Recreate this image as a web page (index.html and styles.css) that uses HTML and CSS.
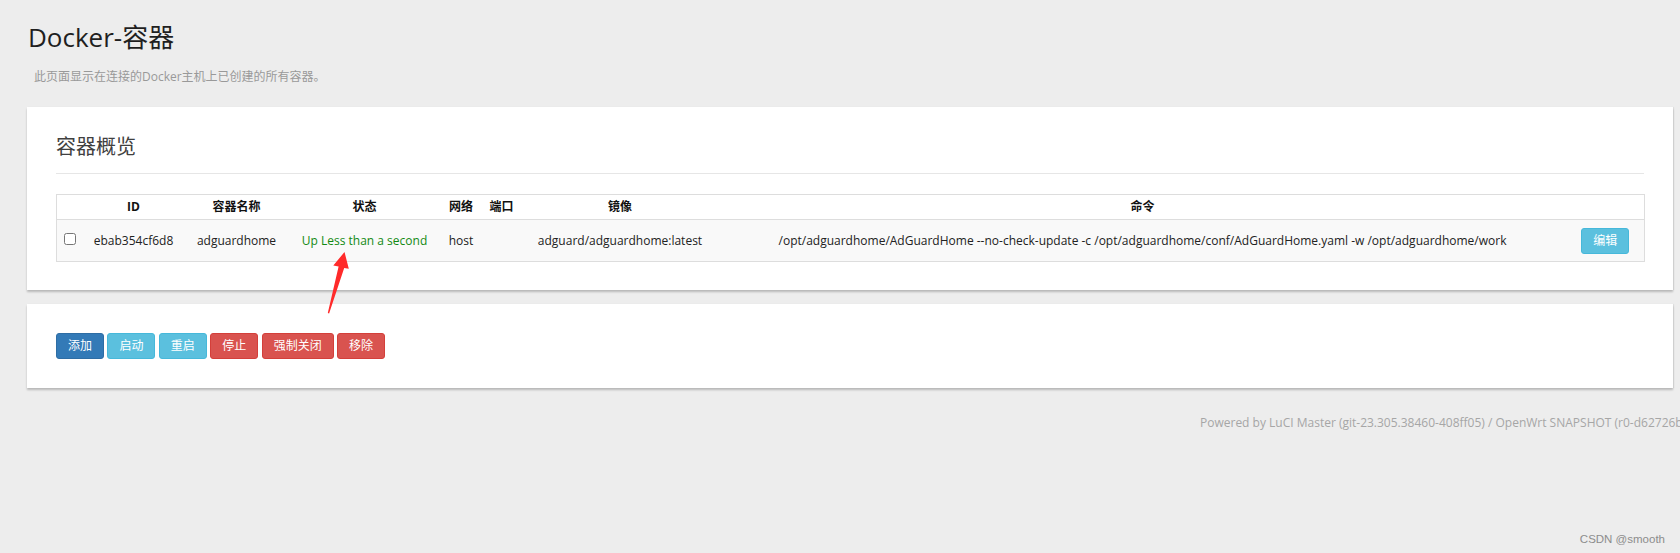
FILE: index.html
```html
<!DOCTYPE html>
<html lang="zh-CN">
<head>
<meta charset="utf-8">
<title>Docker-容器</title>
<link rel="stylesheet" href="styles.css">
</head>
<body>
<div class="page">
  <h2 class="title">Docker-容器</h2>
  <div class="desc">此页面显示在连接的Docker主机上已创建的所有容器。</div>

  <div class="card">
    <h3 class="section-title">容器概览</h3>
    <table class="tbl">
      <colgroup>
        <col class="c-chk"><col class="c-id"><col class="c-name"><col class="c-status"><col class="c-net"><col class="c-port"><col class="c-img"><col class="c-cmd"><col class="c-act">
      </colgroup>
      <thead>
        <tr>
          <th></th><th>ID</th><th>容器名称</th><th>状态</th><th>网络</th><th>端口</th><th>镜像</th><th>命令</th><th></th>
        </tr>
      </thead>
      <tbody>
        <tr>
          <td><input type="checkbox" class="chk"></td>
          <td>ebab354cf6d8</td>
          <td>adguardhome</td>
          <td class="status-up">Up Less than a second</td>
          <td>host</td>
          <td></td>
          <td>adguard/adguardhome:latest</td>
          <td>/opt/adguardhome/AdGuardHome --no-check-update -c /opt/adguardhome/conf/AdGuardHome.yaml -w /opt/adguardhome/work</td>
          <td><button class="btn btn-info">编辑</button></td>
        </tr>
      </tbody>
    </table>
  </div>

  <div class="card card-actions">
    <div class="actions">
      <button class="btn btn-primary">添加</button>
      <button class="btn btn-info">启动</button>
      <button class="btn btn-info">重启</button>
      <button class="btn btn-danger">停止</button>
      <button class="btn btn-danger">强制关闭</button>
      <button class="btn btn-danger">移除</button>
    </div>
  </div>

  <footer class="footer">Powered by LuCI Master (git-23.305.38460-408ff05) / OpenWrt SNAPSHOT (r0-d62726b)</footer>
</div>

<svg class="arrow" width="40" height="80" viewBox="320 245 40 80" xmlns="http://www.w3.org/2000/svg">
  <polygon points="344.5,252 348.8,268.8 344.2,268 329.1,313.4 327.8,313 338.6,266.4 333.3,265.5" fill="#ff2a2a"/>
</svg>
<div class="watermark">CSDN @smooth</div>
</body>
</html>
```

FILE: styles.css
```css
html, body {
  margin: 0;
  padding: 0;
  background: #ededed;
  overflow: hidden;
}

body {
  font-family: "Open Sans", "Noto Sans CJK SC", sans-serif;
  font-size: 12px;
  color: #333;
  height: 553px;
  position: relative;
}

.page {
  padding: 0 7px 0 27px;
}

.title {
  margin: 21px 0 0 1px;
  font-size: 26px;
  line-height: 32px;
  font-weight: normal;
  color: #1f1f1f;
}

.desc {
  margin: 15px 0 0 7px;
  font-size: 12px;
  line-height: 18px;
  color: #999;
}

.card {
  background: #fff;
  margin-top: 21px;
  padding: 26px 29px 28px;
  box-shadow: 0 2px 2px rgba(0, 0, 0, 0.22), 1px 0 1px rgba(0, 0, 0, 0.06);
}

.card-actions {
  margin-top: 14px;
  padding: 29px 29px;
}

.section-title {
  margin: 0;
  font-size: 20px;
  line-height: 28px;
  font-weight: normal;
  color: #404040;
  padding-bottom: 12px;
  border-bottom: 1px solid #e6e6e6;
}

.tbl {
  margin-top: 20px;
  width: 100%;
  table-layout: fixed;
  border-collapse: collapse;
  border: 1px solid #ddd;
}

.c-chk { width: 26px; }
.c-id { width: 102px; }
.c-name { width: 104px; }
.c-status { width: 152px; }
.c-net { width: 41px; }
.c-port { width: 40px; }
.c-img { width: 197px; }
.c-cmd { width: 848px; }
.c-act { width: 78px; }

.tbl th {
  height: 24px;
  padding: 0;
  font-size: 12px;
  line-height: 16px;
  font-weight: bold;
  color: #111;
  text-align: center;
  vertical-align: middle;
  border-bottom: 1px solid #ddd;
  background: #fff;
  white-space: nowrap;
}

.tbl td {
  height: 41px;
  padding: 0;
  font-size: 12px;
  line-height: 16px;
  color: #222;
  text-align: center;
  vertical-align: middle;
  background: #f9f9f9;
  white-space: nowrap;
}

.status-up {
  color: #138a13 !important;
}

.chk {
  width: 12px;
  height: 12px;
  margin: 0 0 4px 0;
  vertical-align: middle;
}

.actions {
  display: flex;
  gap: 3.4px;
}

.btn {
  height: 26px;
  padding: 0 11px;
  border: 1px solid transparent;
  border-radius: 3px;
  font-family: "Open Sans", "Noto Sans CJK SC", sans-serif;
  font-size: 12px;
  line-height: 24px;
  color: #fff;
  cursor: pointer;
}

.btn-primary {
  background: #337ab7;
  border-color: #2e6da4;
}

.btn-info {
  background: #5bc0de;
  border-color: #46b8da;
}

.btn-danger {
  background: #d9534f;
  border-color: #d43f3a;
}

.footer {
  margin-top: 26px;
  padding-left: 1173px;
  font-size: 12px;
  line-height: 18px;
  color: #a6a6a6;
  white-space: nowrap;
}

.arrow {
  position: absolute;
  left: 320px;
  top: 245px;
}

.watermark {
  position: absolute;
  right: 15px;
  top: 531px;
  font-family: "Liberation Sans", Arial, sans-serif;
  font-size: 11.5px;
  line-height: 16px;
  color: #8c8c8c;
}
```
